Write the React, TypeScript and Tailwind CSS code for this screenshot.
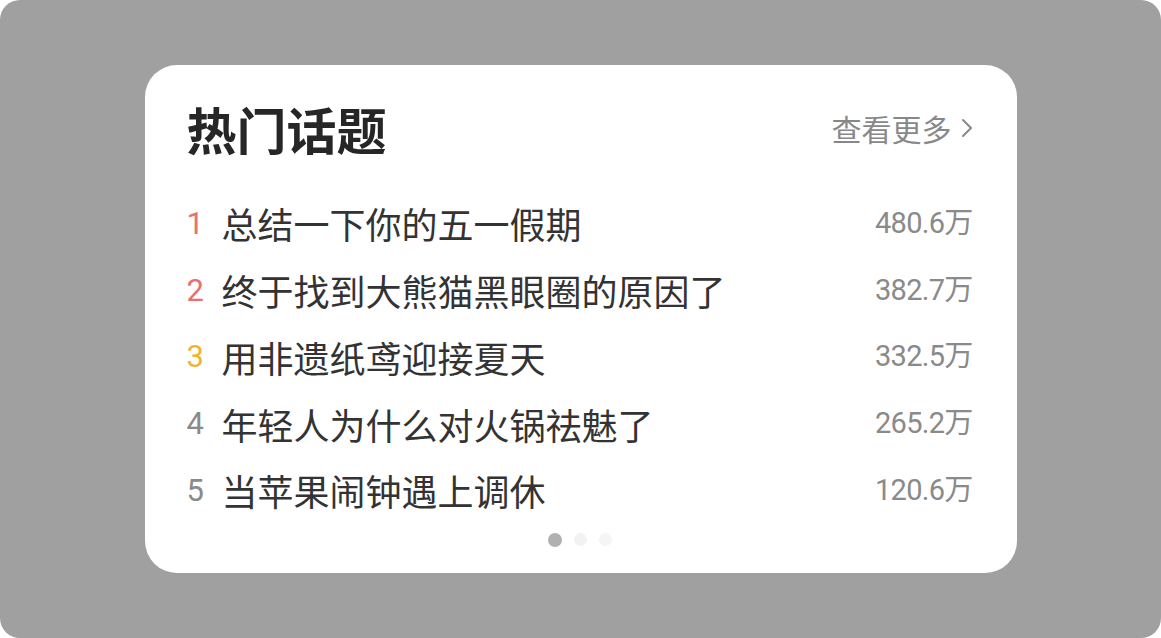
import React from 'react';

interface Topic {
  rank: number;
  title: string;
  heat: string;
}

const topics: Topic[] = [
  { rank: 1, title: '总结一下你的五一假期', heat: '480.6万' },
  { rank: 2, title: '终于找到大熊猫黑眼圈的原因了', heat: '382.7万' },
  { rank: 3, title: '用非遗纸鸢迎接夏天', heat: '332.5万' },
  { rank: 4, title: '年轻人为什么对火锅祛魅了', heat: '265.2万' },
  { rank: 5, title: '当苹果闹钟遇上调休', heat: '120.6万' },
];

const rankColor = (rank: number) => {
  if (rank <= 2) return 'text-[#e8706e]';
  if (rank === 3) return 'text-[#f2b230]';
  return 'text-[#8a8a8a]';
};

export default function App() {
  return (
    <div
      className="w-[1161px] h-[638px] bg-white"
      style={{ fontFamily: '"Noto Sans CJK SC", "Noto Sans", sans-serif' }}
    >
      <div className="w-full h-full bg-[#a0a0a0] rounded-[20px] flex items-center justify-center">
        <div className="w-[872px] h-[508px] bg-white rounded-[32px] pl-[42px] pr-[44px] pt-[36px] flex flex-col">
          {/* Header */}
          <div className="h-[54px] flex items-center justify-between">
            <h1 className="text-[50px] leading-none font-bold text-[#262626]">热门话题</h1>
            <button className="flex items-center gap-[9px] text-[30px] leading-none text-[#888]">
              <span>查看更多</span>
              <svg width="12" height="20" viewBox="0 0 12 20" fill="none">
                <path d="M2 2l8 8-8 8" stroke="#888" strokeWidth="2" strokeLinecap="round" strokeLinejoin="round" />
              </svg>
            </button>
          </div>

          {/* List */}
          <div className="mt-[35px] flex flex-col">
            {topics.map((t) => (
              <div key={t.rank} className="h-[66.75px] flex items-center justify-between">
                <div className="flex items-center">
                  <span
                    className={`w-[35px] text-[31px] leading-none ${rankColor(t.rank)}`}
                    style={{ fontFamily: 'Roboto, sans-serif' }}
                  >
                    {t.rank}
                  </span>
                  <span className="text-[36px] leading-none text-[#333]">{t.title}</span>
                </div>
                <span
                  className="text-[29px] leading-none text-[#8a8a8a] tracking-tight"
                  style={{ fontFamily: 'Roboto, "Noto Sans CJK SC", sans-serif' }}
                >
                  {t.heat}
                </span>
              </div>
            ))}
          </div>

          {/* Pager dots */}
          <div className="mt-[9px] flex items-center justify-center gap-[12px]">
            <span className="w-[14px] h-[14px] rounded-full bg-[#b0b0b0]" />
            <span className="w-[13px] h-[13px] rounded-full bg-[#f2f2f2]" />
            <span className="w-[13px] h-[13px] rounded-full bg-[#f5f5f5]" />
          </div>
        </div>
      </div>
    </div>
  );
}
